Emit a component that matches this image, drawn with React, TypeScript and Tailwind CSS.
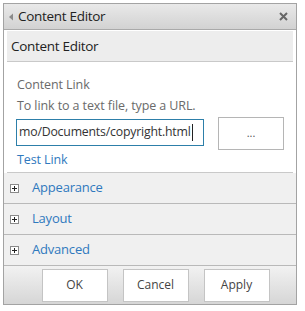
import React from "react";

const font = { fontFamily: '"Open Sans", "Noto Sans", sans-serif' };

function PlusBox() {
  return (
    <span className="flex h-[9px] w-[9px] items-center justify-center border border-[#8a8a8a] bg-white">
      <svg width="7" height="7" viewBox="0 0 7 7">
        <path d="M3.5 1v5M1 3.5h5" stroke="#222" strokeWidth="1" />
      </svg>
    </span>
  );
}

function Section({ label }: { label: string }) {
  return (
    <div className="flex h-[31px] items-center border-b border-[#b9b9b9] bg-[#f0f0f0] pl-[6px]">
      <PlusBox />
      <span className="ml-[13px] text-[13px] tracking-[-0.2px] text-[#2f79be]">{label}</span>
    </div>
  );
}

function FooterButton({ label }: { label: string }) {
  return (
    <button className="flex h-[33px] w-[66px] items-center justify-center border border-[#c4c4c4] bg-white text-[12px] text-[#444]">
      {label}
    </button>
  );
}

export default function App() {
  return (
    <div className="h-[311px] w-[305px] bg-white pl-[3px] pt-[3px]" style={font}>
      <div className="flex h-[302px] w-[294px] flex-col border border-[#a3a3a3] bg-white">
        {/* Title bar */}
        <div className="flex h-[26px] items-center border-b border-[#a9a9a9] bg-gradient-to-b from-[#e9e9e9] to-[#d2d2d2] pl-[4px] pr-[8px]">
          <svg width="6" height="8" viewBox="0 0 6 8">
            <path d="M5 0.5 L1 4 L5 7.5 Z" fill="#8a8a8a" />
          </svg>
          <span className="ml-[4px] flex-1 text-[13.5px] tracking-[-0.3px] text-[#222]">Content Editor</span>
          <svg width="9" height="9" viewBox="0 0 9 9">
            <path d="M1 1 L8 8 M8 1 L1 8" stroke="#666" strokeWidth="2" />
          </svg>
        </div>

        {/* Web part body */}
        <div className="px-[3px] pt-[1px]">
          <div className="flex h-[31px] items-center border-b border-[#c9c9c9] bg-[#ededed] pl-[4px] text-[13.5px] tracking-[-0.3px] text-[#222]">
            Content Editor
          </div>
          <div className="flex flex-col border-b border-[#c9c9c9] pb-[3px] pl-[9px] pt-[14px]">
            <div className="pl-[1px] text-[12.5px] leading-[18px] tracking-[-0.1px] text-[#6a6a6a]">Content Link</div>
            <div className="mt-[3px] pl-[1px] text-[12.5px] leading-[18px] tracking-[-0.1px] text-[#6a6a6a]">
              To link to a text file, type a URL.
            </div>
            <div className="mt-[2px] flex items-start">
              <div className="mt-[2px] flex h-[27px] w-[188px] items-center overflow-hidden border border-[#2d7fa9] pl-[2px] text-[12.3px] tracking-[-0.2px] text-[#333]">
                <span className="whitespace-nowrap">mo/Documents/copyright.html</span>
                <span className="ml-[1px] h-[17px] w-px shrink-0 bg-[#222]" />
              </div>
              <button className="ml-[14px] flex h-[33px] w-[66px] items-center justify-center border border-[#b5b5b5] bg-white text-[11px] text-[#555]">
                ...
              </button>
            </div>
            <div className="mt-[1px] pl-[1px] text-[12.5px] leading-[18px] tracking-[-0.1px] text-[#2f79be]">Test Link</div>
          </div>
        </div>

        <Section label="Appearance" />
        <Section label="Layout" />
        <Section label="Advanced" />

        {/* Footer */}
        <div className="flex flex-1 items-center justify-center gap-[15px] bg-gradient-to-b from-[#f2f2f2] to-[#d6d6d6] pl-[11px]">
          <FooterButton label="OK" />
          <FooterButton label="Cancel" />
          <FooterButton label="Apply" />
        </div>
      </div>
    </div>
  );
}
